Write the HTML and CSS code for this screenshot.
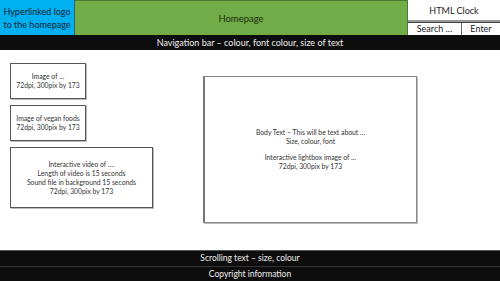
FILE: index.html
```html
<!DOCTYPE html>
<html>
<head>
<meta charset="utf-8">
<link rel="stylesheet" href="styles.css">
</head>
<body>
<div class="page">
  <header class="header">
    <div class="logo">Hyperlinked logo<br>to the homepage</div>
    <div class="home">Homepage</div>
    <div class="side">
      <div class="clock">HTML Clock</div>
      <div class="search">
        <div class="s-field">Search …</div>
        <div class="s-btn">Enter</div>
      </div>
    </div>
  </header>
  <nav class="nav">Navigation bar – colour, font colour, size of text</nav>
  <main class="content">
    <div class="col">
      <div class="box small">Image of …<br>72dpi, 300pix by 173</div>
      <div class="box small">Image of vegan foods<br>72dpi, 300pix by 173</div>
      <div class="box wide">Interactive video of ….<br>Length of video is 15 seconds<br>Sound file in background 15 seconds<br>72dpi, 300pix by 173</div>
    </div>
    <div class="box body">
      <p>Body Text – This will be text about …<br>Size, colour, font</p>
      <p>Interactive lightbox image of …<br>72dpi, 300pix by 173</p>
    </div>
  </main>
  <footer class="footer">
    <div class="f-row">Scrolling text – size, colour</div>
    <div class="f-row">Copyright information</div>
  </footer>
</div>
</body>
</html>
```

FILE: styles.css
```css
* { box-sizing: border-box; }
html, body { margin: 0; padding: 0; }
body { font-family: Lato, "Open Sans", sans-serif; background: #fff; color: #222; }
.page { width: 500px; height: 281px; display: flex; flex-direction: column; }
.header { display: flex; height: 35px; }
.logo { width: 75px; background: #00b0f0; color: #0d2233; font-size: 9px; line-height: 13px; text-align: center; display: flex; align-items: center; justify-content: center; border-right: 1px solid #2a5f86; }
.home { flex: 1; background: #70ad47; color: #1d2a12; font-size: 9.5px; display: flex; align-items: center; justify-content: center; border-top: 1px solid #4a7a2d; border-right: 1px solid #4a7a2d; }
.side { width: 92px; display: flex; flex-direction: column; }
.clock { height: 22px; display: flex; align-items: center; justify-content: center; font-size: 9px; color: #222; border-bottom: 2px solid #999; }
.search { flex: 1; display: flex; font-size: 9px; color: #222; border-top: 1px solid #444; }
.s-field { width: 54px; text-align: center; border-right: 1px solid #666; line-height: 11px; }
.s-btn { flex: 1; text-align: center; line-height: 11px; }
.nav { height: 15px; background: #0d0d0d; color: #eee; font-size: 9px; line-height: 15px; text-align: center; }
.content { flex: 1; display: flex; align-items: flex-start; }
.col { margin: 13px 0 0 10px; display: flex; flex-direction: column; gap: 6px; width: 143px; }
.box { border: 1px solid #555; box-shadow: 1px 1px 0 #bbb; color: #333; font-size: 6.8px; line-height: 9px; text-align: center; display: flex; flex-direction: column; align-items: center; justify-content: center; }
.small { width: 76px; height: 36px; }
.wide { width: 143px; height: 61px; }
.body { margin: 26px 0 0 50px; width: 214px; height: 147px; border-color: #888; border-left: 2px solid #777; line-height: 9.5px; }
.body p { margin: 0 0 6px; }
.body p:last-child { margin-bottom: 0; }
.footer { display: flex; flex-direction: column; border-top: 1px solid #555; }
.f-row { height: 15px; background: #0d0d0d; color: #eee; font-size: 8.5px; line-height: 15px; text-align: center; }
.f-row + .f-row { border-top: 1px solid #333; }
```
